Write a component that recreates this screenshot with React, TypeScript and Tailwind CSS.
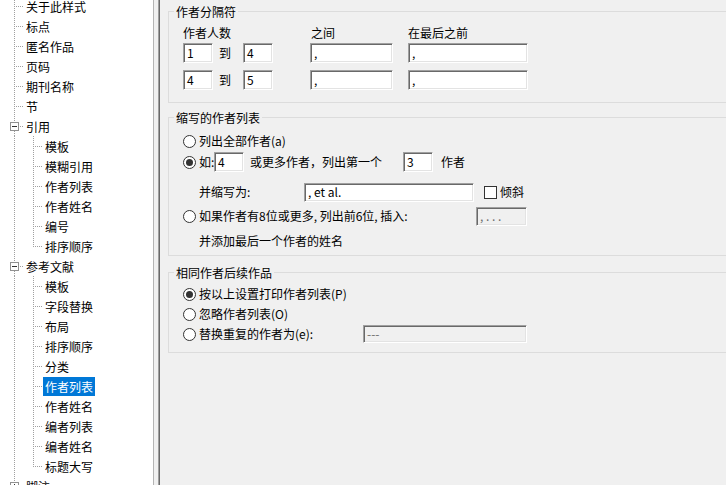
import React from "react";

type Node = {
  label: string;
  level: 0 | 1;
  expand?: "-" | "+";
  last?: boolean;
  selected?: boolean;
};

const tree: Node[] = [
  { label: "关于此样式", level: 0 },
  { label: "标点", level: 0 },
  { label: "匿名作品", level: 0 },
  { label: "页码", level: 0 },
  { label: "期刊名称", level: 0 },
  { label: "节", level: 0 },
  { label: "引用", level: 0, expand: "-" },
  { label: "模板", level: 1 },
  { label: "模糊引用", level: 1 },
  { label: "作者列表", level: 1 },
  { label: "作者姓名", level: 1 },
  { label: "编号", level: 1 },
  { label: "排序顺序", level: 1, last: true },
  { label: "参考文献", level: 0, expand: "-" },
  { label: "模板", level: 1 },
  { label: "字段替换", level: 1 },
  { label: "布局", level: 1 },
  { label: "排序顺序", level: 1 },
  { label: "分类", level: 1 },
  { label: "作者列表", level: 1, selected: true },
  { label: "作者姓名", level: 1 },
  { label: "编者列表", level: 1 },
  { label: "编者姓名", level: 1 },
  { label: "标题大写", level: 1, last: true },
  { label: "脚注", level: 0, expand: "+" },
];

const dot = { stroke: "#a0a0a0", strokeDasharray: "1 1", shapeRendering: "crispEdges" as const };

function TreeRow({ node }: { node: Node }) {
  const w = node.level === 0 ? 24 : 43;
  return (
    <div className="flex h-[20px] items-center">
      <svg width={w} height={20} className="shrink-0">
        {node.expand ? (
          <>
            <line x1={14.5} y1={0} x2={14.5} y2={6} {...dot} />
            <line x1={14.5} y1={15} x2={14.5} y2={20} {...dot} />
            <line x1={20} y1={10.5} x2={24} y2={10.5} {...dot} />
            <rect x={10.5} y={6.5} width={8} height={8} fill="#fff" stroke="#919191" shapeRendering="crispEdges" />
            <line x1={12} y1={10.5} x2={17} y2={10.5} stroke="#333" shapeRendering="crispEdges" />
            {node.expand === "+" && (
              <line x1={14.5} y1={8} x2={14.5} y2={13} stroke="#333" shapeRendering="crispEdges" />
            )}
          </>
        ) : (
          <>
            <line x1={14.5} y1={0} x2={14.5} y2={20} {...dot} />
            {node.level === 0 ? (
              <line x1={16} y1={10.5} x2={24} y2={10.5} {...dot} />
            ) : (
              <>
                <line x1={33.5} y1={0} x2={33.5} y2={node.last ? 11 : 20} {...dot} />
                <line x1={35} y1={10.5} x2={43} y2={10.5} {...dot} />
              </>
            )}
          </>
        )}
      </svg>
      <span
        className={
          node.selected
            ? "whitespace-nowrap bg-[#0078d7] px-[2px] leading-[19px] text-white"
            : "whitespace-nowrap px-[2px] leading-[19px]"
        }
      >
        {node.label}
      </span>
    </div>
  );
}

function Box({
  className,
  value,
  disabled,
}: {
  className: string;
  value: string;
  disabled?: boolean;
}) {
  return (
    <div
      className={
        "flex shrink-0 items-center overflow-hidden whitespace-nowrap border border-t-[#a0a0a0] border-l-[#a0a0a0] border-r-white border-b-white pl-[3px] shadow-[inset_1px_1px_0_#696969,inset_-1px_-1px_0_#e3e3e3] " +
        (disabled ? "bg-[#f0f0f0] text-[#6d6d6d] " : "bg-white ") +
        className
      }
    >
      {value}
    </div>
  );
}

function Radio({ checked }: { checked?: boolean }) {
  return (
    <span className="flex h-[13px] w-[13px] shrink-0 items-center justify-center rounded-full border border-[#333] bg-white">
      {checked && <span className="h-[7px] w-[7px] rounded-full bg-[#333]" />}
    </span>
  );
}

function Legend({ children }: { children: React.ReactNode }) {
  return <legend className="ml-[5px] px-[2px] leading-[17px]">{children}</legend>;
}

export default function App() {
  return (
    <div className="flex h-[485px] w-[726px] overflow-hidden bg-[#f0f0f0] font-['Noto_Sans_CJK_SC',sans-serif] text-[12px] text-black">
      {/* Tree */}
      <div className="w-[154px] shrink-0 overflow-hidden border-r border-[#b4b4b4] bg-white">
        <div className="-mt-[4px]">
          {tree.map((n, i) => (
            <TreeRow key={i} node={n} />
          ))}
        </div>
      </div>

      {/* Settings panel */}
      <div className="ml-[4px] min-w-0 flex-1 overflow-hidden border-l border-[#a0a0a0] shadow-[inset_1px_0_0_#696969]">
        {/* 作者分隔符 */}
        <fieldset className="ml-[9px] mt-[3px] w-[620px] border border-[#dcdcdc]">
          <Legend>作者分隔符</Legend>
          <div className="pb-[12px] pl-[14px] pt-[4px]">
            <div className="flex h-[17px] leading-[17px]">
              <span className="w-[127px]">作者人数</span>
              <span className="w-[98px] pl-[1px]">之间</span>
              <span>在最后之前</span>
            </div>
            <div className="mt-[2px] flex h-[20px] items-center">
              <Box className="h-[20px] w-[30px]" value="1" />
              <span className="ml-[6px]">到</span>
              <Box className="ml-[12px] h-[20px] w-[30px]" value="4" />
              <Box className="ml-[37px] h-[20px] w-[83px]" value="," />
              <Box className="ml-[15px] h-[20px] w-[120px]" value="," />
            </div>
            <div className="mt-[7px] flex h-[20px] items-center">
              <Box className="h-[20px] w-[30px]" value="4" />
              <span className="ml-[6px]">到</span>
              <Box className="ml-[12px] h-[20px] w-[30px]" value="5" />
              <Box className="ml-[37px] h-[20px] w-[83px]" value="," />
              <Box className="ml-[15px] h-[20px] w-[120px]" value="," />
            </div>
          </div>
        </fieldset>

        {/* 缩写的作者列表 */}
        <fieldset className="ml-[9px] mt-[6px] w-[620px] border border-[#dcdcdc]">
          <Legend>缩写的作者列表</Legend>
          <div className="pb-[4px] pl-[14px] pt-[5px]">
            <div className="flex h-[20px] items-center">
              <Radio />
              <span className="ml-[3px]">列出全部作者(a)</span>
            </div>
            <div className="mt-[1px] flex h-[20px] items-center">
              <Radio checked />
              <span className="ml-[3px] w-[15px] overflow-hidden whitespace-nowrap">如:</span>
              <Box className="h-[20px] w-[30px]" value="4" />
              <span className="ml-[6px] w-[153px] whitespace-nowrap">或更多作者，列出第一个</span>
              <Box className="h-[20px] w-[30px]" value="3" />
              <span className="ml-[8px]">作者</span>
            </div>
            <div className="mt-[10px] flex h-[20px] items-center pl-[16px]">
              <span className="w-[105px]">并缩写为:</span>
              <Box className="h-[19px] w-[170px]" value=", et al." />
              <span className="ml-[10px] h-[13px] w-[13px] shrink-0 border border-[#333] bg-white" />
              <span className="ml-[3px]">倾斜</span>
            </div>
            <div className="mt-[4px] flex h-[20px] items-center">
              <Radio />
              <span className="ml-[3px] w-[277px] whitespace-nowrap">如果作者有8位或更多, 列出前6位, 插入:</span>
              <Box className="h-[19px] w-[51px]" value=", . . ." disabled />
            </div>
            <div className="mt-[5px] flex h-[20px] items-center pl-[16px]">
              <span>并添加最后一个作者的姓名</span>
            </div>
          </div>
        </fieldset>

        {/* 相同作者后续作品 */}
        <fieldset className="ml-[9px] mt-[8px] w-[620px] border border-[#dcdcdc]">
          <Legend>相同作者后续作品</Legend>
          <div className="pb-[8px] pl-[14px] pt-[3px]">
            <div className="flex h-[20px] items-center">
              <Radio checked />
              <span className="ml-[3px]">按以上设置打印作者列表(P)</span>
            </div>
            <div className="flex h-[20px] items-center">
              <Radio />
              <span className="ml-[3px]">忽略作者列表(O)</span>
            </div>
            <div className="flex h-[20px] items-center">
              <Radio />
              <span className="ml-[3px] w-[164px] whitespace-nowrap">替换重复的作者为(e):</span>
              <Box className="h-[18px] w-[164px]" value="---" disabled />
            </div>
          </div>
        </fieldset>
      </div>
    </div>
  );
}
